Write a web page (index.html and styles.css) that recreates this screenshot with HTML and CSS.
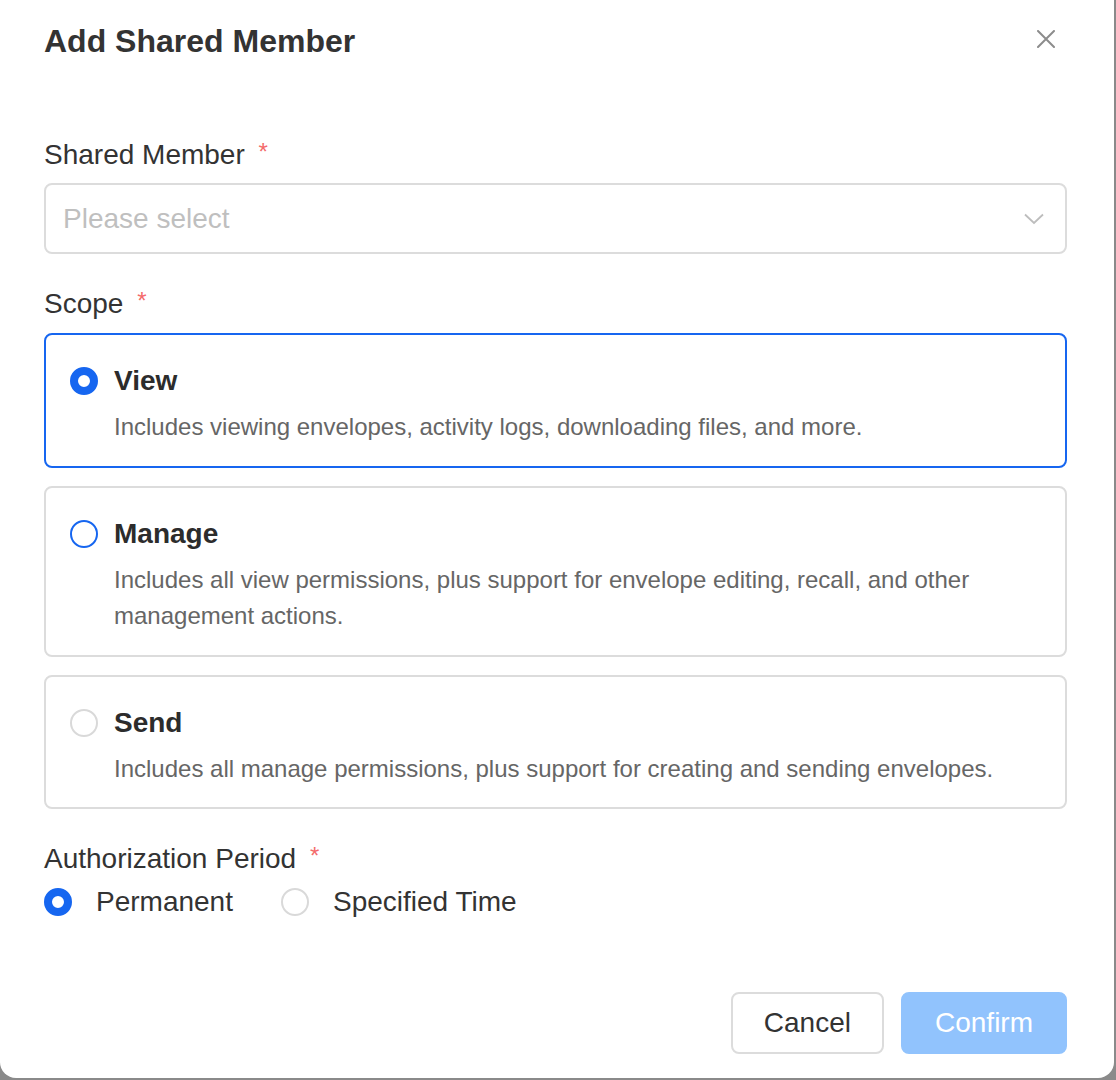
FILE: index.html
```html
<!DOCTYPE html>
<html lang="en">

<head>
    <meta charset="UTF-8">
    <meta name="viewport" content="width=device-width, initial-scale=1.0">
    <title>Add Shared Member</title>
    <link rel="stylesheet" href="styles.css">
</head>

<body>
    <div class="modal">
        <div class="modal-header">
            <h2 class="modal-title">Add Shared Member</h2>
            <button type="button" class="modal-close" aria-label="Close">
                <svg width="18" height="18" viewBox="0 0 18 18">
                    <path d="M1 1L17 17M17 1L1 17" stroke="#8c8c8c" stroke-width="2" stroke-linecap="round" />
                </svg>
            </button>
        </div>

        <div class="modal-body">
            <div class="form-item">
                <div class="form-label">Shared Member <span class="required">*</span></div>
                <div class="select">
                    <span class="select-placeholder">Please select</span>
                    <svg class="select-arrow" width="20" height="12" viewBox="0 0 20 12">
                        <path d="M1 1.5L10 10L19 1.5" fill="none" stroke="#bdbdbd" stroke-width="1.8" />
                    </svg>
                </div>
            </div>

            <div class="form-item">
                <div class="form-label label-tight">Scope <span class="required">*</span></div>
                <div class="scope-list">
                    <label class="scope-card active">
                        <span class="radio checked"></span>
                        <span class="scope-text">
                            <span class="scope-title">View</span>
                            <span class="scope-desc">Includes viewing envelopes, activity logs, downloading files, and more.</span>
                        </span>
                    </label>
                    <label class="scope-card">
                        <span class="radio hover"></span>
                        <span class="scope-text">
                            <span class="scope-title">Manage</span>
                            <span class="scope-desc">Includes all view permissions, plus support for envelope editing, recall, and other management actions.</span>
                        </span>
                    </label>
                    <label class="scope-card">
                        <span class="radio"></span>
                        <span class="scope-text">
                            <span class="scope-title">Send</span>
                            <span class="scope-desc">Includes all manage permissions, plus support for creating and sending envelopes.</span>
                        </span>
                    </label>
                </div>
            </div>

            <div class="form-item last">
                <div class="form-label label-period">Authorization Period <span class="required">*</span></div>
                <div class="radio-group">
                    <label class="radio-option">
                        <span class="radio checked"></span>
                        <span>Permanent</span>
                    </label>
                    <label class="radio-option">
                        <span class="radio"></span>
                        <span>Specified Time</span>
                    </label>
                </div>
            </div>
        </div>

        <div class="modal-footer">
            <button type="button" class="btn">Cancel</button>
            <button type="button" class="btn btn-primary" disabled>Confirm</button>
        </div>
    </div>
</body>

</html>
```

FILE: styles.css
```css
body {
    margin: 0;
    background-color: #8a8a8a;
    font-family: "Liberation Sans", Arial, Helvetica, sans-serif;
    color: #333;
}

.modal {
    width: 1114px;
    background: #fff;
    border-radius: 0 0 16px 16px;
    box-sizing: border-box;
    padding: 21px 47px 24px 44px;
}

.modal-header {
    display: flex;
    justify-content: space-between;
    align-items: flex-start;
    height: 40px;
}

.modal-title {
    margin: 0;
    font-size: 32px;
    line-height: 40px;
    font-weight: bold;
    color: #333;
}

.modal-close {
    width: 40px;
    height: 40px;
    margin-top: -2px;
    margin-right: 1px;
    padding: 0;
    border: none;
    background: none;
    display: flex;
    align-items: center;
    justify-content: center;
    cursor: pointer;
}

.modal-body {
    padding-top: 74px;
}

.form-item {
    margin-bottom: 30px;
}

.form-item.last {
    margin-bottom: 0;
}

.form-label {
    height: 40px;
    font-size: 28px;
    line-height: 40px;
    margin-bottom: 8px;
}

.label-tight {
    margin-bottom: 9px;
}

.label-period {
    margin-bottom: 3px;
}

.required {
    color: #f46b6b;
    font-size: 24px;
    line-height: 1;
    margin-left: 6px;
    vertical-align: 4px;
}

.select {
    height: 71px;
    box-sizing: border-box;
    border: 2px solid #dcdcdc;
    border-radius: 8px;
    display: flex;
    align-items: center;
    justify-content: space-between;
    padding: 0 21px 0 17px;
}

.select-placeholder {
    font-size: 28px;
    color: #bfbfbf;
}

.scope-list {
    display: flex;
    flex-direction: column;
    gap: 18px;
}

.scope-card {
    display: flex;
    gap: 16px;
    border: 2px solid #dcdcdc;
    border-radius: 8px;
    padding: 28px 24px 21px;
    cursor: pointer;
}

.scope-card:last-child {
    padding-bottom: 20px;
}

.scope-card.active {
    border-color: #1666f0;
}

.scope-card .radio {
    margin-top: 4px;
}

.scope-text {
    display: flex;
    flex-direction: column;
    gap: 10px;
}

.scope-title {
    font-size: 28px;
    line-height: 36px;
    font-weight: bold;
    color: #2c2c2c;
}

.scope-desc {
    font-size: 24px;
    line-height: 36px;
    color: #666;
}

.radio {
    flex: none;
    width: 28px;
    height: 28px;
    box-sizing: border-box;
    border: 2px solid #d9d9d9;
    border-radius: 50%;
    background: #fff;
}

.radio.hover {
    border-color: #1666f0;
}

.radio.checked {
    border: 8px solid #1666f0;
}

.radio-group {
    display: flex;
    gap: 48px;
    height: 40px;
    align-items: center;
}

.radio-option {
    display: flex;
    align-items: center;
    gap: 24px;
    font-size: 28px;
    cursor: pointer;
}

.modal-footer {
    display: flex;
    justify-content: flex-end;
    gap: 17px;
    padding-top: 70px;
}

.btn {
    height: 62px;
    padding: 0 31px;
    border: 2px solid #dcdcdc;
    border-radius: 8px;
    background: #fff;
    font-family: inherit;
    font-size: 28px;
    color: #333;
    cursor: pointer;
}

.btn-primary {
    border-color: #91c3fd;
    background: #91c3fd;
    color: #fff;
    padding: 0 32px;
}
```
